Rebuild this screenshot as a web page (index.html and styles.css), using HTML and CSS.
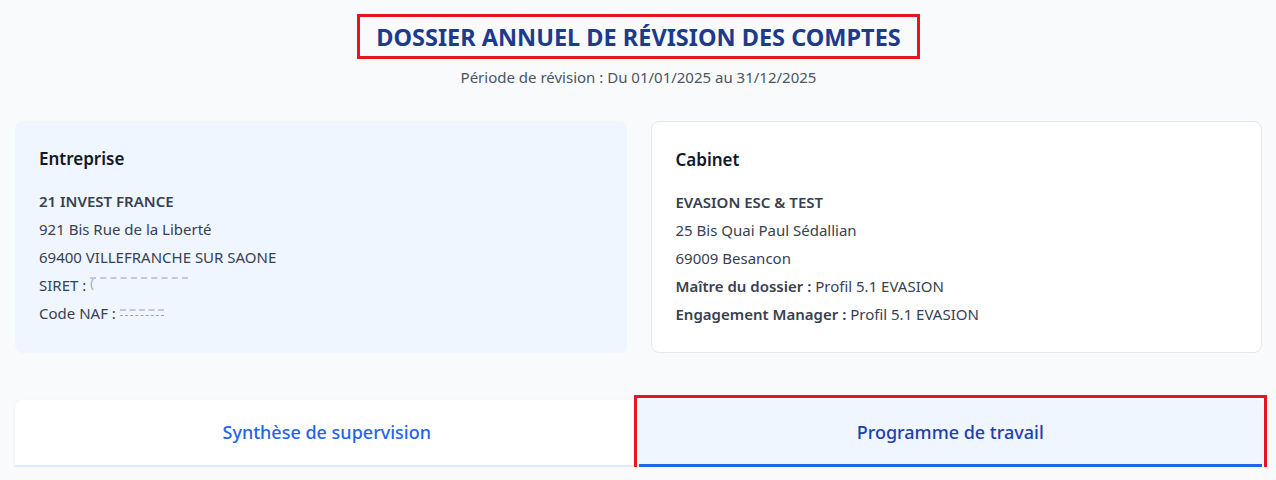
FILE: index.html
```html
<!DOCTYPE html>
<html lang="fr">
<head>
    <meta charset="UTF-8">
    <meta name="viewport" content="width=device-width, initial-scale=1.0">
    <title>Dossier annuel de révision des comptes</title>
    <link rel="stylesheet" href="styles.css">
</head>
<body>
    <div class="page">
        <header class="header">
            <h1 class="title">DOSSIER ANNUEL DE RÉVISION DES COMPTES</h1>
            <p class="period">Période de révision : Du 01/01/2025 au 31/12/2025</p>
        </header>

        <div class="cards">
            <div class="card card-company">
                <h2>Entreprise</h2>
                <p class="strong">21 INVEST FRANCE</p>
                <p>921 Bis Rue de la Liberté</p>
                <p>69400 VILLEFRANCHE SUR SAONE</p>
                <p>SIRET : <span class="masked masked-long">(</span></p>
                <p>Code NAF : <span class="masked masked-short"></span></p>
            </div>

            <div class="card card-office">
                <h2>Cabinet</h2>
                <p class="strong">EVASION ESC &amp; TEST</p>
                <p>25 Bis Quai Paul Sédallian</p>
                <p>69009 Besancon</p>
                <p><b>Maître du dossier :</b> Profil 5.1 EVASION</p>
                <p><b>Engagement Manager :</b> Profil 5.1 EVASION</p>
            </div>
        </div>

        <nav class="tabs">
            <button type="button" class="tab">Synthèse de supervision</button>
            <button type="button" class="tab active">Programme de travail</button>
        </nav>
    </div>
</body>
</html>
```

FILE: styles.css
```css
body {
    font-family: "Noto Sans", "Open Sans", sans-serif;
    background-color: #f8fafc;
    color: #374151;
    margin: 0;
}
.page {
    padding: 14px 14px 0 15px;
}
.header {
    display: flex;
    flex-direction: column;
    align-items: center;
}
.title {
    margin: 0;
    padding: 5px 16px 4px;
    border: 3px solid #e8141f;
    color: #1e3a8a;
    font-size: 23.5px;
    font-weight: 700;
    line-height: 30px;
}
.period {
    margin: 8px 0 0;
    font-size: 15px;
    line-height: 20px;
    color: #4b5563;
}
.cards {
    display: grid;
    grid-template-columns: 1fr 1fr;
    gap: 24px;
    margin-top: 34px;
}
.card {
    height: 232px;
    box-sizing: border-box;
    padding: 25px 24px 23px;
    border-radius: 8px;
}
.card-company {
    background: #eff6ff;
}
.card-office {
    background: #fff;
    border: 1px solid #e5e7eb;
}
.card h2 {
    margin: 0 0 15px;
    font-size: 17px;
    font-weight: 600;
    line-height: 26px;
    color: #111827;
}
.card p {
    margin: 0;
    font-size: 15px;
    line-height: 28px;
}
.card .strong,
.card b {
    font-weight: 600;
    color: #374151;
}
.masked {
    display: inline-block;
    height: 10px;
    vertical-align: 3px;
    border-top: 2px dashed #c4c9d2;
    color: #9ca3af;
    font-size: 12px;
    line-height: 10px;
}
.masked-long {
    width: 98px;
}
.masked-short {
    width: 44px;
    border-bottom: 1px dashed #9ca3af;
    height: 4px;
}
.tabs {
    display: grid;
    grid-template-columns: 1fr 1fr;
    margin-top: 47px;
    background: #fff;
    border-radius: 8px 8px 0 0;
    box-shadow: 0 1px 3px rgba(0,0,0,0.08);
}
.tab {
    font-family: inherit;
    font-size: 18px;
    font-weight: 500;
    line-height: 24px;
    padding: 20px 10px 21px;
    border: none;
    border-bottom: 2px solid #dbeafe;
    background: transparent;
    color: #2563eb;
    cursor: pointer;
}
.tab.active {
    background: #eff6ff;
    color: #1e40af;
    border-bottom: 3px solid #2563eb;
    padding-bottom: 20px;
    outline: 3px solid #e8141f;
    outline-offset: 2px;
}
```
